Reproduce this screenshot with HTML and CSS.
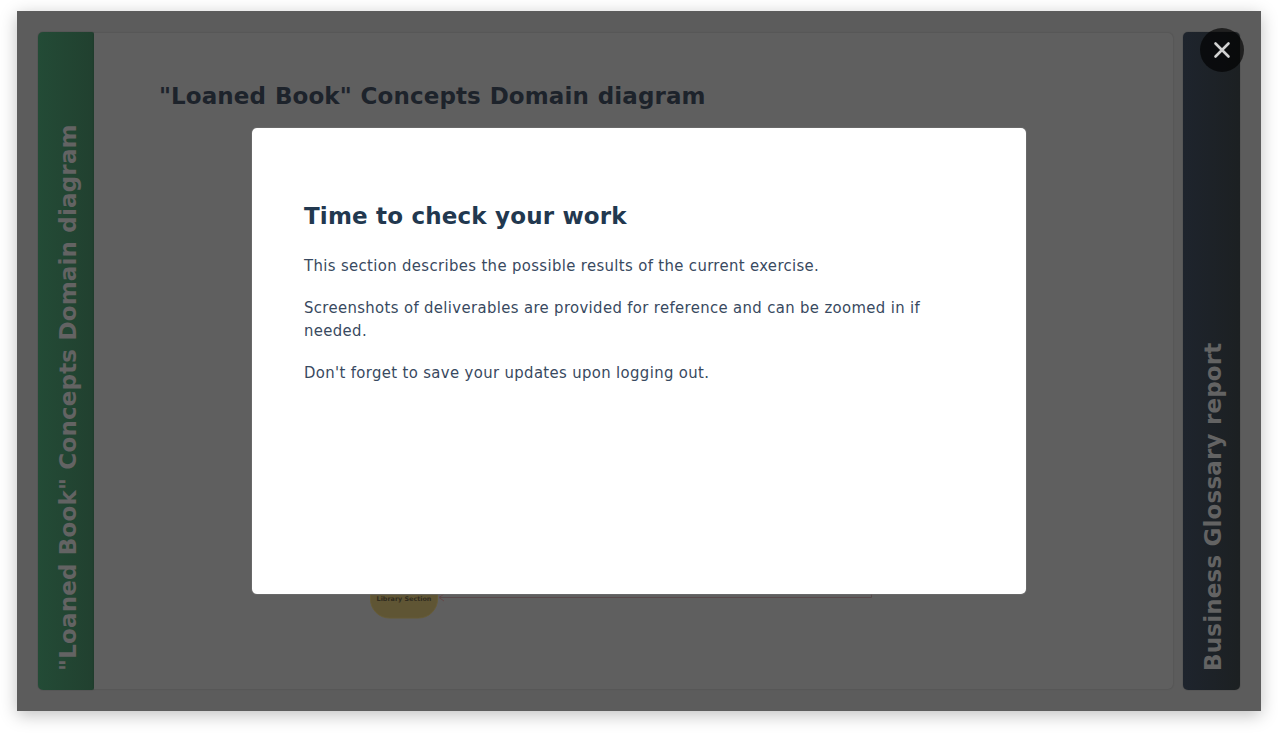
FILE: index.html
```html
<!DOCTYPE html>
<html lang="en">
<head>
<meta charset="utf-8">
<title>Time to check your work</title>
<link rel="stylesheet" href="styles.css">
</head>
<body>
<main class="stage">
  <div class="panels">
    <div class="tab tab-green"><span class="tab-label">"Loaned Book" Concepts Domain diagram</span></div>
    <section class="page">
      <h1 class="page-title">"Loaned Book" Concepts Domain diagram</h1>
      <svg class="diagram" width="504" height="40" viewBox="0 0 504 40">
        <rect x="0.5" y="-26" width="67" height="50" rx="19" fill="#5f5534" stroke="#665b35"/>
        <path d="M69 3.500H501.500V0" fill="none" stroke="#57494a"/>
        <path d="M74 0l-5 3.500 5 3.500" fill="none" stroke="#654848"/>
        <text class="node-label" x="34" y="6.500" text-anchor="middle">Library Section</text>
      </svg>
    </section>
    <div class="tab tab-dark"><span class="tab-label">Business Glossary report</span></div>
  </div>
  <section class="dialog">
    <h2 class="dialog-title">Time to check your work</h2>
    <p>This section describes the possible results of the current exercise.</p>
    <p>Screenshots of deliverables are provided for reference and can be zoomed in if<br>needed.</p>
    <p>Don't forget to save your updates upon logging out.</p>
  </section>
  <button class="close" aria-label="Close">
    <svg width="44" height="44" viewBox="0 0 44 44"><path d="M15.500 15.500L28.500 28.500M28.500 15.500L15.500 28.500" stroke="#d2d2d2" stroke-width="2.600" stroke-linecap="round"/></svg>
  </button>
</main>
</body>
</html>
```
FILE: styles.css
```css
* { box-sizing: border-box; }
body {
  margin: 0;
  padding: 11px 17px;
  height: 734px;
  overflow: hidden;
  background: #fff;
  font-family: "DejaVu Sans", Verdana, sans-serif;
}
.stage {
  position: relative;
  width: 1244px;
  height: 700px;
  padding: 21px;
  background: #5c5c5c;
  box-shadow: 0 4px 16px rgba(0, 0, 0, 0.25);
}
.panels { display: flex; height: 658px; width: 1202px; }
.tab {
  display: flex;
  flex: none;
  justify-content: center;
  border-radius: 5px;
  box-shadow: 0 0 1px rgba(0, 0, 0, 0.6);
}
.tab-green { width: 56px; background: linear-gradient(90deg, #234b36, #21402f); border-radius: 5px 2px 2px 5px; }
.tab-dark { width: 57px; margin-left: 10px; background: linear-gradient(90deg, #1e242d, #1c2022); }
.tab-label {
  writing-mode: vertical-rl;
  transform: translateX(2px) rotate(180deg);
  padding-top: 19px;
  width: 100%;
  line-height: 57px;
  font-size: 23px;
  font-weight: bold;
  letter-spacing: 0.18px;
  color: #636363;
  white-space: nowrap;
}
.page {
  width: 1079px;
  margin: 1px 0;
  padding: 48px 0 0 65px;
  background: #5f5f5f;
  border-radius: 0 5px 5px 0;
  box-shadow: 0 0 2px rgba(0, 0, 0, 0.2);
}
.page-title {
  margin: 0;
  font-size: 23px;
  line-height: 30px;
  letter-spacing: 0.1px;
  word-spacing: 0.7px;
  color: #1d232b;
  white-space: nowrap;
}
.diagram { display: block; margin: 483px 0 0 211px; }
.node-label { font-size: 6.400px; font-weight: bold; fill: #302b1e; }
.dialog {
  position: absolute;
  left: 235px;
  top: 117px;
  width: 774px;
  height: 466px;
  padding: 73px 52px;
  border-radius: 5px;
  background: #fff;
  color: #384960;
  box-shadow: 0 0 1px 1px rgba(110, 110, 110, 0.8);
}
.dialog-title { margin: 0 0 23px; font-size: 23px; line-height: 30px; letter-spacing: 0.18px; color: #22384f; }
.dialog p {
  margin: 0 0 19px;
  font-family: "DejaVu Sans Condensed", "DejaVu Sans", sans-serif;
  font-stretch: semi-condensed;
  font-size: 16.500px;
  letter-spacing: 0.37px;
  line-height: 23px;
  white-space: nowrap;
}
.close {
  position: absolute;
  left: 1183px;
  top: 17px;
  width: 44px;
  height: 44px;
  padding: 0;
  border: 0;
  border-radius: 50%;
  background: rgba(0, 0, 0, 0.65);
}
.close svg { display: block; }
```
